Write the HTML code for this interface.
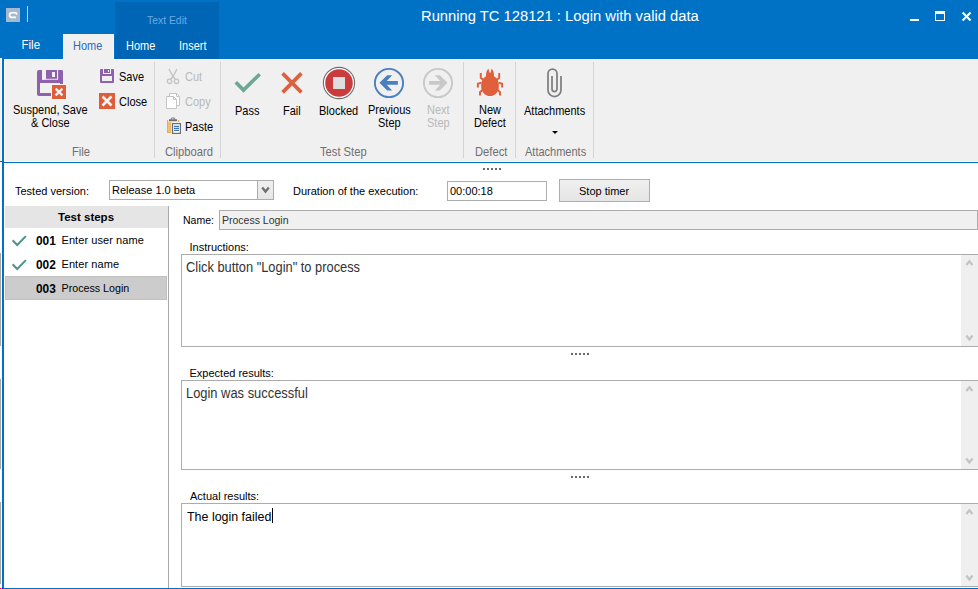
<!DOCTYPE html>
<html><head><meta charset="utf-8"><style>
html,body{margin:0;padding:0;}
body{width:978px;height:589px;position:relative;overflow:hidden;background:#fff;font-family:"Liberation Sans",sans-serif;}
.t{position:absolute;white-space:pre;}
.r{position:absolute;}
svg.r{display:block;overflow:visible;}
</style></head><body>
<div class="r" style="left:0px;top:0px;width:978px;height:59px;background:#0072c6;"></div>
<div class="r" style="left:115px;top:2px;width:104px;height:57px;background:#0065b4;"></div>
<div class="r" style="left:63px;top:34px;width:51px;height:26px;background:#f0f0f0;"></div>
<div class="r" style="left:63px;top:34px;width:1px;height:25px;background:#f8f8f8;"></div>
<div class="r" style="left:113px;top:34px;width:1px;height:25px;background:#f8f8f8;"></div>
<svg class="r" style="left:6px;top:8px" width="14" height="14" viewBox="0 0 14 14"><rect width="14" height="14" fill="#a6b9d0"/><path d="M9.8,4.75 H5.9 A2.35,2.35 0 0 0 5.9,9.45 H9.9 M9.6,4.75 Q10.7,4.9 10.4,6.6" fill="none" stroke="#fff" stroke-width="1.7"/></svg>
<div class="r" style="left:27px;top:6px;width:1px;height:16px;background:#c9cfd8;"></div>
<div class="t" style="left:421px;top:9px;font-size:14.76px;line-height:14.76px;color:#fff;font-weight:normal;">Running TC 128121 : Login with valid data</div>
<div class="r" style="left:910px;top:19px;width:9px;height:2px;background:#fff;"></div>
<div class="r" style="left:935px;top:11px;width:10px;height:10px;box-sizing:border-box;border:1.5px solid #fff;border-top-width:3px"></div>
<svg class="r" style="left:961px;top:11px" width="12" height="12" viewBox="0 0 12 12"><path d="M1.6,1.6 L9.6,9.6 M9.6,1.6 L1.6,9.6" stroke="#fff" stroke-width="2.1"/></svg>
<div class="t" style="left:21.5px;top:40px;font-size:11.5px;line-height:11.5px;color:#fff;font-weight:normal;transform:scaleY(1.12);transform-origin:0 9px;">File</div>
<div class="t" style="left:73px;top:41px;font-size:11px;line-height:11px;color:#2c6bc0;font-weight:normal;transform:scaleY(1.12);transform-origin:0 9px;">Home</div>
<div class="t" style="left:126px;top:41px;font-size:11px;line-height:11px;color:#fff;font-weight:normal;transform:scaleY(1.12);transform-origin:0 9px;">Home</div>
<div class="t" style="left:179px;top:41px;font-size:11px;line-height:11px;color:#fff;font-weight:normal;transform:scaleY(1.12);transform-origin:0 9px;">Insert</div>
<div class="t" style="left:147px;top:16px;font-size:10.4px;line-height:10.4px;color:#6aaae6;font-weight:normal;">Text Edit</div>
<div class="r" style="left:4px;top:59px;width:974px;height:102px;background:#f0f0f0;"></div>
<div class="r" style="left:4px;top:59px;width:59px;height:1px;background:#fff;"></div>
<div class="r" style="left:114px;top:59px;width:864px;height:1px;background:#fff;"></div>
<div class="r" style="left:4px;top:59px;width:1px;height:102px;background:#fff;"></div>
<div class="r" style="left:0px;top:58px;width:2px;height:103px;background:#f0f0f0;"></div>
<div class="r" style="left:1px;top:58px;width:1px;height:103px;background:#fff;"></div>
<div class="r" style="left:0px;top:161px;width:2px;height:1px;background:#0072c6;"></div>
<div class="r" style="left:4px;top:161px;width:974px;height:1px;background:#fdfbf7;"></div>
<div class="r" style="left:4px;top:162px;width:974px;height:1px;background:#0072c6;"></div>
<div class="r" style="left:2px;top:58px;width:2px;height:531px;background:#0072c6;"></div>
<div class="r" style="left:0px;top:253px;width:1px;height:93px;background:#a8a8a8;"></div>
<div class="r" style="left:0px;top:379px;width:1px;height:90px;background:#a8a8a8;"></div>
<div class="r" style="left:0px;top:502px;width:1px;height:82px;background:#a8a8a8;"></div>
<div class="r" style="left:0px;top:588px;width:978px;height:1px;background:#0072c6;"></div>
<div class="r" style="left:0px;top:588px;width:1px;height:1px;background:#f00;"></div>
<div class="r" style="left:1px;top:588px;width:1px;height:1px;background:#0f0;"></div>
<div class="r" style="left:2px;top:588px;width:1px;height:1px;background:#00f;"></div>
<div class="r" style="left:154px;top:62px;width:1px;height:96px;background:#d4d4d4;"></div>
<div class="r" style="left:220px;top:62px;width:1px;height:96px;background:#d4d4d4;"></div>
<div class="r" style="left:463px;top:62px;width:1px;height:96px;background:#d4d4d4;"></div>
<div class="r" style="left:515px;top:62px;width:1px;height:96px;background:#d4d4d4;"></div>
<div class="r" style="left:593px;top:62px;width:1px;height:96px;background:#d4d4d4;"></div>
<svg class="r" style="left:36px;top:69px" width="32" height="32" viewBox="0 0 32 32">
<path d="M3,1 H26 Q27,1 27,3 V26 Q27,27 26,27 H3 Q1,27 1,25 V3 Q1,1 3,1 Z" fill="#8e61ad"/>
<rect x="6" y="1" width="4" height="9.6" fill="#f0f0f0"/>
<rect x="21" y="1" width="1.1" height="9.6" fill="#f0f0f0"/>
<rect x="6" y="9.8" width="16" height="0.9" fill="#f0f0f0"/>
<rect x="16" y="3" width="3" height="5" fill="#f0f0f0"/>
<rect x="4" y="14" width="20" height="10" fill="#f0f0f0"/>
<rect x="15" y="15" width="16" height="16" fill="#f6f6f6"/>
<rect x="16" y="16" width="14" height="14" fill="#e05d3a"/>
<path d="M19.6,19.6 L26.4,26.4 M26.4,19.6 L19.6,26.4" stroke="#f2f2f2" stroke-width="2.3"/>
</svg>
<div class="t" style="left:13px;top:105px;font-size:11px;line-height:11px;color:#000;font-weight:normal;transform:scaleY(1.1);transform-origin:0 9px;">Suspend, Save</div>
<div class="t" style="left:31px;top:118px;font-size:11px;line-height:11px;color:#000;font-weight:normal;transform:scaleY(1.1);transform-origin:0 9px;">&amp; Close</div>
<div class="t" style="left:72px;top:147px;font-size:11.2px;line-height:11.2px;color:#6f6f6f;font-weight:normal;transform:scaleY(1.1);transform-origin:0 9px;">File</div>
<svg class="r" style="left:100px;top:69px" width="14" height="14" viewBox="0 0 14 14">
<path d="M1,0 H13 Q14,0 14,1 V13 Q14,14 13,14 H1 Q0,14 0,13 V1 Q0,0 1,0 Z" fill="#8e61ad"/>
<rect x="3" y="0" width="1" height="5" fill="#f0f0f0"/>
<rect x="10" y="0" width="1" height="5" fill="#f0f0f0"/>
<rect x="3" y="4" width="8" height="1" fill="#f0f0f0"/>
<rect x="8" y="1" width="1" height="2" fill="#f0f0f0"/>
<rect x="2" y="7" width="10" height="5" fill="#f0f0f0"/>
</svg>
<div class="t" style="left:119px;top:72px;font-size:11px;line-height:11px;color:#000;font-weight:normal;transform:scaleY(1.1);transform-origin:0 9px;">Save</div>
<svg class="r" style="left:99px;top:93px" width="16" height="16" viewBox="0 0 16 16">
<rect width="16" height="16" fill="#e05d3a"/>
<path d="M3.5,3.5 L12.5,12.5 M12.5,3.5 L3.5,12.5" stroke="#f4f4f4" stroke-width="2.6"/>
</svg>
<div class="t" style="left:119px;top:97px;font-size:11px;line-height:11px;color:#000;font-weight:normal;transform:scaleY(1.1);transform-origin:0 9px;">Close</div>
<svg class="r" style="left:165px;top:68px" width="16" height="17" viewBox="0 0 16 17">
<path d="M4,1 L8,8.5 L12,1" fill="none" stroke="#c4c4c4" stroke-width="1.4"/>
<path d="M8,8.5 L5.5,11.5 M8,8.5 L10.5,11.5" stroke="#c4c4c4" stroke-width="1.4"/>
<circle cx="4.5" cy="13.3" r="2.2" fill="none" stroke="#c4c4c4" stroke-width="1.3"/>
<circle cx="11.5" cy="13.3" r="2.2" fill="none" stroke="#c4c4c4" stroke-width="1.3"/>
</svg>
<div class="t" style="left:185px;top:72px;font-size:11px;line-height:11px;color:#b9b9b9;font-weight:normal;transform:scaleY(1.1);transform-origin:0 9px;">Cut</div>
<svg class="r" style="left:165px;top:92px" width="16" height="18" viewBox="0 0 16 18">
<path d="M4.5,1.5 H11.5 L14.5,4.5 V13.5 H4.5 Z" fill="#fff" stroke="#c4c4c4" stroke-width="1"/>
<path d="M11.5,1.5 V4.5 H14.5" fill="none" stroke="#c4c4c4" stroke-width="1"/>
<path d="M1.5,4.5 H8.5 L11.5,7.5 V16.5 H1.5 Z" fill="#fff" stroke="#c4c4c4" stroke-width="1"/>
<path d="M8.5,4.5 V7.5 H11.5" fill="none" stroke="#c4c4c4" stroke-width="1"/>
</svg>
<div class="t" style="left:185px;top:97px;font-size:11px;line-height:11px;color:#b9b9b9;font-weight:normal;transform:scaleY(1.1);transform-origin:0 9px;">Copy</div>
<svg class="r" style="left:164px;top:115px" width="20" height="22" viewBox="0 0 20 22">
<rect x="3" y="5" width="1.2" height="13" fill="#e8ad4c"/>
<rect x="4" y="7" width="3" height="11" fill="#eec078"/>
<rect x="6.6" y="7" width="0.6" height="11" fill="#e8ad4c"/>
<rect x="3" y="17" width="4" height="1" fill="#e8ad4c"/>
<rect x="14" y="5" width="1.2" height="2" fill="#e8ad4c"/>
<rect x="5" y="4.3" width="8" height="1.9" fill="#6e6e6e"/>
<path d="M7.3,4.6 V3.8 Q7.3,3 8.2,3 H10 Q10.8,3 10.8,3.8 V4.6" fill="none" stroke="#6e6e6e" stroke-width="1"/>
<rect x="8.6" y="8.6" width="7.8" height="9.8" fill="#fff" stroke="#6e6e6e" stroke-width="1.2"/>
<path d="M10,11.4 H15 M10,13.4 H15 M10,15.4 H15" stroke="#3d77c0" stroke-width="1.1"/>
</svg>
<div class="t" style="left:185px;top:122px;font-size:11px;line-height:11px;color:#000;font-weight:normal;transform:scaleY(1.1);transform-origin:0 9px;">Paste</div>
<div class="t" style="left:165px;top:147px;font-size:11.2px;line-height:11.2px;color:#6f6f6f;font-weight:normal;transform:scaleY(1.1);transform-origin:0 9px;">Clipboard</div>
<svg class="r" style="left:233px;top:71px" width="30" height="24" viewBox="0 0 30 24">
<path d="M2.8,11.3 L10.5,19.1 L26.7,3.2" fill="none" stroke="#6ba895" stroke-width="3.6"/>
</svg>
<div class="t" style="left:235px;top:106px;font-size:11px;line-height:11px;color:#000;font-weight:normal;transform:scaleY(1.1);transform-origin:0 9px;">Pass</div>
<svg class="r" style="left:280px;top:71px" width="24" height="24" viewBox="0 0 24 24">
<path d="M2.6,2.4 L21.4,21.4 M21.4,2.4 L2.6,21.4" fill="none" stroke="#dd613e" stroke-width="3.7"/>
</svg>
<div class="t" style="left:283px;top:106px;font-size:11px;line-height:11px;color:#000;font-weight:normal;transform:scaleY(1.1);transform-origin:0 9px;">Fail</div>
<svg class="r" style="left:322px;top:66px" width="34" height="34" viewBox="0 0 34 34">
<circle cx="17" cy="17" r="15.6" fill="#fff" stroke="#6e6e6e" stroke-width="1.1"/>
<circle cx="17" cy="17" r="13.8" fill="#cc3b3b"/>
<rect x="11" y="11" width="12" height="12" fill="#dedede"/>
</svg>
<div class="t" style="left:319px;top:106px;font-size:11px;line-height:11px;color:#000;font-weight:normal;transform:scaleY(1.1);transform-origin:0 9px;">Blocked</div>
<svg class="r" style="left:372px;top:66px" width="34" height="34" viewBox="0 0 34 34">
<circle cx="17" cy="17" r="14.1" fill="none" stroke="#4a7fc0" stroke-width="1.9"/>
<path d="M7.5,16.85 L15.2,9.2 H20.1 L14.8,15 H25.9 V18.7 H14.8 L20.1,24.5 H15.2 Z" fill="#4a7fc0"/>
</svg>
<div class="t" style="left:368px;top:105px;font-size:11px;line-height:11px;color:#000;font-weight:normal;transform:scaleY(1.1);transform-origin:0 9px;">Previous</div>
<div class="t" style="left:378px;top:118px;font-size:11px;line-height:11px;color:#000;font-weight:normal;transform:scaleY(1.1);transform-origin:0 9px;">Step</div>
<svg class="r" style="left:421px;top:66px" width="34" height="34" viewBox="0 0 34 34">
<circle cx="17" cy="17" r="14.1" fill="none" stroke="#c8c8c8" stroke-width="1.9"/>
<path d="M26.5,16.85 L18.8,9.2 H13.9 L19.2,15 H8.1 V18.7 H19.2 L13.9,24.5 H18.8 Z" fill="#c8c8c8"/>
</svg>
<div class="t" style="left:427px;top:105px;font-size:11px;line-height:11px;color:#b9b9b9;font-weight:normal;transform:scaleY(1.1);transform-origin:0 9px;">Next</div>
<div class="t" style="left:427px;top:118px;font-size:11px;line-height:11px;color:#b9b9b9;font-weight:normal;transform:scaleY(1.1);transform-origin:0 9px;">Step</div>
<div class="t" style="left:320px;top:147px;font-size:11.2px;line-height:11.2px;color:#6f6f6f;font-weight:normal;transform:scaleY(1.1);transform-origin:0 9px;">Test Step</div>
<svg class="r" style="left:476px;top:68px" width="28" height="30" viewBox="0 0 28 30">
<path d="M14,7.4 C20,7.4 22.9,12 22.9,18 C22.9,24 19,28.1 14,28.1 C9,28.1 5.1,24 5.1,18 C5.1,12 8,7.4 14,7.4 Z" fill="#e0603c"/>
<path d="M10,9 Q9.6,3 12.6,0.8 L13.2,4.6 H14.8 L15.4,0.8 Q18.4,3 18,9 Z" fill="#e0603c"/>
<path d="M4.8,5 V9.8 L7.6,12.2 M23.2,5 V9.8 L20.4,12.2 M1.9,19.6 V15.8 L5.4,14.6 M26.1,19.6 V15.8 L22.6,14.6 M4,27.6 V24.2 L7,21.6 M24,27.6 V24.2 L21,21.6" fill="none" stroke="#e0603c" stroke-width="2"/>
</svg>
<div class="t" style="left:479px;top:105px;font-size:11px;line-height:11px;color:#000;font-weight:normal;transform:scaleY(1.1);transform-origin:0 9px;">New</div>
<div class="t" style="left:474px;top:118px;font-size:11px;line-height:11px;color:#000;font-weight:normal;transform:scaleY(1.1);transform-origin:0 9px;">Defect</div>
<div class="t" style="left:475px;top:147px;font-size:11.2px;line-height:11.2px;color:#6f6f6f;font-weight:normal;transform:scaleY(1.1);transform-origin:0 9px;">Defect</div>
<svg class="r" style="left:544px;top:66px" width="20" height="34" viewBox="0 0 20 34">
<path d="M8,9.9 V23 A2.5,2.5 0 0 0 13,23 V7.6 A4.5,4.5 0 0 0 4,7.6 V24.1 A6.5,6.5 0 0 0 17,24.1 V9.9" fill="none" stroke="#7f7f7f" stroke-width="1.75"/>
</svg>
<div class="t" style="left:524px;top:106px;font-size:11px;line-height:11px;color:#000;font-weight:normal;transform:scaleY(1.1);transform-origin:0 9px;">Attachments</div>
<svg class="r" style="left:552px;top:131px" width="6" height="3" viewBox="0 0 6 3"><path d="M0,0 H6 L3,3 Z" fill="#000"/></svg>
<div class="t" style="left:525px;top:147px;font-size:11px;line-height:11px;color:#6f6f6f;font-weight:normal;transform:scaleY(1.1);transform-origin:0 9px;">Attachments</div>
<div class="r" style="left:483px;top:168px;width:2px;height:2px;background:#6a6a6a;"></div>
<div class="r" style="left:487px;top:168px;width:2px;height:2px;background:#6a6a6a;"></div>
<div class="r" style="left:491px;top:168px;width:2px;height:2px;background:#6a6a6a;"></div>
<div class="r" style="left:495px;top:168px;width:2px;height:2px;background:#6a6a6a;"></div>
<div class="r" style="left:499px;top:168px;width:2px;height:2px;background:#6a6a6a;"></div>
<div class="t" style="left:15px;top:186px;font-size:11px;line-height:11px;color:#000;font-weight:normal;">Tested version:</div>
<div class="r" style="left:109px;top:180px;width:165px;height:20px;box-sizing:border-box;border:1px solid #acacac;background:#fff;"></div>
<div class="r" style="left:257px;top:180px;width:17px;height:20px;box-sizing:border-box;border:1px solid #acacac;background:linear-gradient(#efefef,#e6e6e6);"></div>
<svg class="r" style="left:261px;top:186px" width="9" height="8" viewBox="0 0 9 8"><path d="M1.2,1.6 L4.5,5.6 L7.8,1.6" fill="none" stroke="#707070" stroke-width="2.3"/></svg>
<div class="t" style="left:112px;top:185px;font-size:11px;line-height:11px;color:#000;font-weight:normal;">Release 1.0 beta</div>
<div class="t" style="left:293px;top:186px;font-size:11px;line-height:11px;color:#000;font-weight:normal;">Duration of the execution:</div>
<div class="r" style="left:447px;top:181px;width:100px;height:20px;box-sizing:border-box;border:1px solid #acacac;background:#fff;"></div>
<div class="t" style="left:450px;top:186px;font-size:11px;line-height:11px;color:#000;font-weight:normal;">00:00:18</div>
<div class="r" style="left:559px;top:179px;width:91px;height:23px;box-sizing:border-box;border:1px solid #adadad;background:linear-gradient(#f0f0f0,#e5e5e5);"></div>
<div class="t" style="left:579px;top:186px;font-size:11px;line-height:11px;color:#000;font-weight:normal;">Stop timer</div>
<div class="r" style="left:5px;top:206px;width:163px;height:22px;background:#e5e5e5;"></div>
<div class="r" style="left:168px;top:206px;width:1px;height:382px;background:#a8a8a8;"></div>
<div class="t" style="left:58px;top:212px;font-size:11.5px;line-height:11.5px;color:#000;font-weight:bold;">Test steps</div>
<svg class="r" style="left:11px;top:235px" width="16" height="12" viewBox="0 0 16 12"><path d="M1.6,5.3 L6.2,10 L14.9,1.1" fill="none" stroke="#4f918c" stroke-width="2"/></svg>
<div class="t" style="left:36px;top:236px;font-size:11.9px;line-height:11.9px;color:#000;font-weight:bold;">001</div>
<div class="t" style="left:61.5px;top:235px;font-size:11px;line-height:11px;color:#000;font-weight:normal;letter-spacing:0.07px;">Enter user name</div>
<svg class="r" style="left:11px;top:259px" width="16" height="12" viewBox="0 0 16 12"><path d="M1.6,5.3 L6.2,10 L14.9,1.1" fill="none" stroke="#4f918c" stroke-width="2"/></svg>
<div class="t" style="left:36px;top:260px;font-size:11.9px;line-height:11.9px;color:#000;font-weight:bold;">002</div>
<div class="t" style="left:61.5px;top:259px;font-size:11px;line-height:11px;color:#000;font-weight:normal;letter-spacing:0.07px;">Enter name</div>
<div class="r" style="left:5px;top:276px;width:162px;height:24px;box-sizing:border-box;border:1px solid #c0c0c0;background:#cccccc;"></div>
<div class="t" style="left:36px;top:284px;font-size:11.9px;line-height:11.9px;color:#000;font-weight:bold;">003</div>
<div class="t" style="left:61.5px;top:283px;font-size:10.7px;line-height:10.7px;color:#000;font-weight:normal;">Process Login</div>
<div class="t" style="left:183px;top:215px;font-size:10.5px;line-height:10.5px;color:#000;font-weight:normal;">Name:</div>
<div class="r" style="left:219px;top:210px;width:759px;height:20px;box-sizing:border-box;border:1px solid #acacac;background:#f0f0f0;"></div>
<div class="t" style="left:222px;top:215px;font-size:10.5px;line-height:10.5px;color:#333;font-weight:normal;">Process Login</div>
<div class="t" style="left:189.5px;top:242px;font-size:11px;line-height:11px;color:#000;font-weight:normal;">Instructions:</div>
<div class="r" style="left:181px;top:254px;width:805px;height:93px;box-sizing:border-box;border:1px solid #acacac;background:#fff;"></div>
<div class="r" style="left:961px;top:255px;width:17px;height:91px;background:#efefef;"></div>
<svg class="r" style="left:965px;top:259px" width="9" height="8" viewBox="0 0 9 8"><path d="M1.3,6.1 L4.4,2.3 L7.5,6.1" fill="none" stroke="#c4c4c4" stroke-width="2.3"/></svg>
<svg class="r" style="left:965px;top:334px" width="9" height="8" viewBox="0 0 9 8"><path d="M1.3,1.6 L4.4,5.4 L7.5,1.6" fill="none" stroke="#c4c4c4" stroke-width="2.3"/></svg>
<div class="t" style="left:186px;top:262px;font-size:12.85px;line-height:12.85px;color:#333;font-weight:normal;transform:scaleY(1.1);transform-origin:0 10px;">Click button &quot;Login&quot; to process</div>
<div class="r" style="left:571px;top:353px;width:2px;height:2px;background:#6a6a6a;"></div>
<div class="r" style="left:575px;top:353px;width:2px;height:2px;background:#6a6a6a;"></div>
<div class="r" style="left:579px;top:353px;width:2px;height:2px;background:#6a6a6a;"></div>
<div class="r" style="left:583px;top:353px;width:2px;height:2px;background:#6a6a6a;"></div>
<div class="r" style="left:587px;top:353px;width:2px;height:2px;background:#6a6a6a;"></div>
<div class="t" style="left:189.5px;top:368px;font-size:11px;line-height:11px;color:#000;font-weight:normal;">Expected results:</div>
<div class="r" style="left:181px;top:380px;width:805px;height:90px;box-sizing:border-box;border:1px solid #acacac;background:#fff;"></div>
<div class="r" style="left:961px;top:381px;width:17px;height:88px;background:#efefef;"></div>
<svg class="r" style="left:965px;top:385px" width="9" height="8" viewBox="0 0 9 8"><path d="M1.3,6.1 L4.4,2.3 L7.5,6.1" fill="none" stroke="#c4c4c4" stroke-width="2.3"/></svg>
<svg class="r" style="left:965px;top:457px" width="9" height="8" viewBox="0 0 9 8"><path d="M1.3,1.6 L4.4,5.4 L7.5,1.6" fill="none" stroke="#c4c4c4" stroke-width="2.3"/></svg>
<div class="t" style="left:186px;top:388px;font-size:12.9px;line-height:12.9px;color:#333;font-weight:normal;transform:scaleY(1.1);transform-origin:0 10px;">Login was successful</div>
<div class="r" style="left:571px;top:476px;width:2px;height:2px;background:#6a6a6a;"></div>
<div class="r" style="left:575px;top:476px;width:2px;height:2px;background:#6a6a6a;"></div>
<div class="r" style="left:579px;top:476px;width:2px;height:2px;background:#6a6a6a;"></div>
<div class="r" style="left:583px;top:476px;width:2px;height:2px;background:#6a6a6a;"></div>
<div class="r" style="left:587px;top:476px;width:2px;height:2px;background:#6a6a6a;"></div>
<div class="t" style="left:190px;top:491px;font-size:11px;line-height:11px;color:#000;font-weight:normal;">Actual results:</div>
<div class="r" style="left:181px;top:503px;width:805px;height:84px;box-sizing:border-box;border:1px solid #acacac;background:#fff;"></div>
<div class="r" style="left:961px;top:504px;width:17px;height:82px;background:#efefef;"></div>
<svg class="r" style="left:965px;top:508px" width="9" height="8" viewBox="0 0 9 8"><path d="M1.3,6.1 L4.4,2.3 L7.5,6.1" fill="none" stroke="#c4c4c4" stroke-width="2.3"/></svg>
<svg class="r" style="left:965px;top:574px" width="9" height="8" viewBox="0 0 9 8"><path d="M1.3,1.6 L4.4,5.4 L7.5,1.6" fill="none" stroke="#c4c4c4" stroke-width="2.3"/></svg>
<div class="t" style="left:187px;top:511px;font-size:12.45px;line-height:12.45px;color:#000;font-weight:normal;transform:scaleY(1.1);transform-origin:0 10px;">The login failed</div>
<div class="r" style="left:272px;top:508px;width:1px;height:15px;background:#000;"></div>
</body></html>
